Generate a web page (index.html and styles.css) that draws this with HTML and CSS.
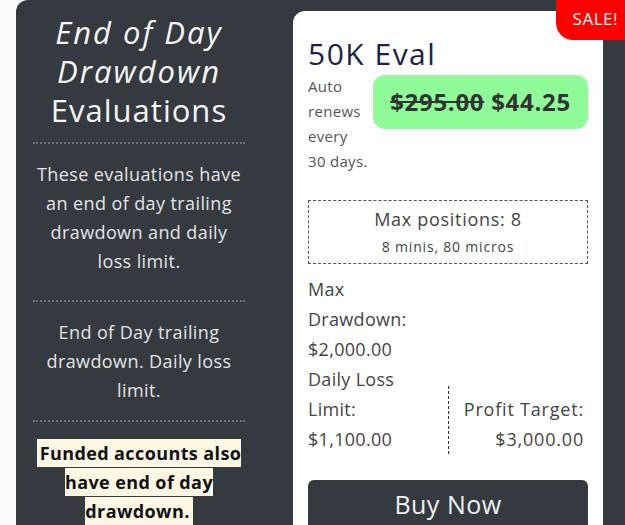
FILE: index.html
```html
<!DOCTYPE html>
<html lang="en">
<head>
    <meta charset="UTF-8">
    <meta name="viewport" content="width=device-width, initial-scale=1.0">
    <title>End of Day Drawdown Evaluations</title>
    <link rel="stylesheet" href="styles.css">
</head>
<body>

    <div class="eval-section">
        <!-- Left intro column -->
        <div class="intro">
            <h1 class="intro-title"><em>End of Day Drawdown</em> Evaluations</h1>
            <hr class="dots">
            <p class="intro-text">These evaluations have an end of day trailing drawdown and daily loss limit.</p>
            <hr class="dots dots-mid">
            <p class="intro-text">End of Day trailing drawdown. Daily loss limit.</p>
            <hr class="dots dots-last">
            <p class="intro-note"><mark>Funded accounts also have end of day drawdown.</mark></p>
        </div>

        <!-- Plan card -->
        <div class="plan-card">
            <span class="sale-badge">SALE!</span>
            <h2 class="plan-name">50K Eval</h2>
            <div class="plan-pricing">
                <p class="renew-text">Auto renews every 30&nbsp;days.</p>
                <div class="price-pill">
                    <s>$295.00</s> $44.25
                </div>
            </div>

            <div class="positions-box">
                <div class="positions-main">Max positions: 8</div>
                <div class="positions-sub">8 minis, 80 micros</div>
            </div>

            <div class="plan-stats">
                <div class="stat">Max Drawdown: $2,000.00</div>
                <div class="stat-spacer"></div>
                <div class="stat">Daily Loss Limit: $1,100.00</div>
                <div class="stat stat-right">Profit Target: $3,000.00</div>
            </div>

            <button class="btn-buy">Buy Now</button>
        </div>
    </div>

</body>
</html>
```

FILE: styles.css
```css
/* Reset */
*, *::before, *::after {
    box-sizing: border-box;
    margin: 0;
    padding: 0;
}

body {
    font-family: 'Open Sans', sans-serif;
    background-color: #fafafa;
    overflow: hidden;
}

/* Dark section wrapper */
.eval-section {
    margin-left: 16px;
    min-height: 525px;
    background-color: #343a40;
    border-top-left-radius: 12px;
    display: flex;
    align-items: flex-start;
}

/* Intro column */
.intro {
    width: 246px;
    padding: 13px 17px 0;
    text-align: center;
    color: #e4e4e4;
}

.intro-title {
    font-size: 31px;
    font-weight: 400;
    line-height: 39px;
    letter-spacing: 1px;
    color: #f5f5f5;
    padding: 0 5px;
}

.intro-title em {
    letter-spacing: 2px;
}

.dots {
    border: none;
    border-top: 2px dotted #6c7077;
    margin: 12px 0 16px;
}

.dots-mid {
    margin-top: 24px;
}

.dots-last {
    margin-top: 15px;
    margin-bottom: 17px;
}

.intro-text {
    font-size: 18px;
    line-height: 29px;
    letter-spacing: 0.4px;
}

.intro-note {
    font-size: 18px;
    font-weight: 700;
    line-height: 29px;
    letter-spacing: 0.4px;
}

.intro-note mark {
    background-color: #fdf6e3;
    color: #111;
    padding: 2px 3px;
}

/* Plan card */
.plan-card {
    position: relative;
    width: 310px;
    margin: 11px 0 0 31px;
    padding: 23px 15px 0;
    background-color: #fff;
    border-radius: 12px;
    min-height: 520px;
    color: #444;
}

.sale-badge {
    position: absolute;
    top: -11px;
    right: -22px;
    background-color: #ff0000;
    color: #fff;
    font-size: 17px;
    letter-spacing: 0.5px;
    padding: 7px 7px 10px 17px;
    border-bottom-left-radius: 17px;
}

.plan-name {
    font-size: 30px;
    font-weight: 400;
    line-height: 40px;
    letter-spacing: 1.5px;
    color: #1d1f4b;
}

.plan-pricing {
    display: flex;
    align-items: flex-start;
    gap: 3px;
}

.renew-text {
    width: 62px;
    font-size: 15px;
    line-height: 25px;
    letter-spacing: 0.3px;
    color: #555;
}

.price-pill {
    flex: 1;
    margin-top: 1px;
    padding: 10px 0 11px;
    background-color: #8ffa98;
    border-radius: 12px;
    text-align: center;
    font-size: 24px;
    font-weight: 700;
    letter-spacing: 0.7px;
    color: #333;
}

.positions-box {
    margin-top: 26px;
    border: 1px dashed #555;
    text-align: center;
    padding: 4px 0 2px;
}

.positions-main {
    font-size: 18px;
    line-height: 28px;
    letter-spacing: 0.7px;
}

.positions-sub {
    font-size: 14px;
    line-height: 28px;
    letter-spacing: 0.8px;
}

/* Stats grid */
.plan-stats {
    display: flex;
    flex-wrap: wrap;
    align-items: flex-end;
    margin-top: 10px;
    font-size: 18px;
    line-height: 30px;
    letter-spacing: 0.3px;
}

.stat,
.stat-spacer {
    width: 50%;
}

.stat {
    padding-right: 20px;
}

.stat-right {
    padding: 8px 4px 0 10px;
    text-align: right;
    letter-spacing: 0.8px;
    border-left: 1px dashed #333;
}

.btn-buy {
    display: block;
    width: 100%;
    margin-top: 26px;
    height: 60px;
    border: none;
    border-radius: 6px;
    background-color: #343a40;
    color: #f0f0f0;
    font-family: inherit;
    font-size: 25px;
    letter-spacing: 0.5px;
    padding-bottom: 12px;
    cursor: pointer;
}
```
